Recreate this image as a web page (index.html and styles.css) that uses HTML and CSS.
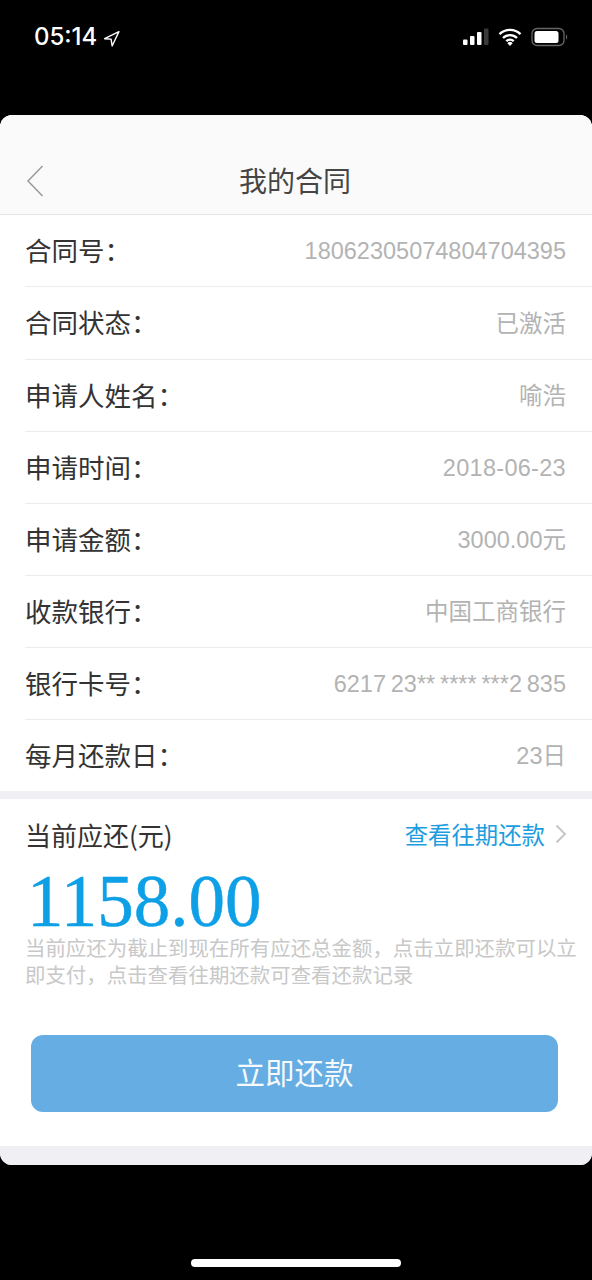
FILE: index.html
```html
<!DOCTYPE html>
<html lang="zh">
<head>
<meta charset="utf-8">
<title>我的合同</title>
<link rel="stylesheet" href="styles.css">
</head>
<body>
<div class="screen">
  <div class="statusbar">
    <div class="status-left">
      <span class="time">05:14</span>
      <svg class="loc" width="17" height="17" viewBox="0 0 16 16"><path d="M15 1.500 1.500 8.200 7.600 8.600 8.600 15Z" fill="none" stroke="#fff" stroke-width="1.300" stroke-linejoin="round"/></svg>
    </div>
    <div class="status-right">
      <svg width="26" height="18" viewBox="0 0 26 18"><rect x="0" y="11.500" width="4.500" height="5.500" rx="1" fill="#fff"/><rect x="7" y="8" width="4.500" height="9" rx="1" fill="#fff"/><rect x="14" y="4" width="4.500" height="13" rx="1" fill="#fff"/><rect x="21" y="0.500" width="4.500" height="16.500" rx="1" fill="#3a3a3a"/></svg>
      <svg width="24" height="18" viewBox="0 0 24 18"><path d="M1.500 6.200a15 15 0 0 1 21 0M5 10a10 10 0 0 1 14 0M8.300 13.200a5.400 5.400 0 0 1 7.400 0" fill="none" stroke="#fff" stroke-width="2.400"/><path d="M12 18l-2.600-2.800a3.600 3.600 0 0 1 5.200 0Z" fill="#fff"/></svg>
      <svg width="38" height="20" viewBox="0 0 38 20"><rect x="1" y="1.500" width="32" height="17" rx="5" fill="none" stroke="#666" stroke-width="1.300"/><rect x="3.500" y="4" width="24" height="12" rx="2.500" fill="#fff"/><path d="M35 7.500c1.600.4 1.600 4.600 0 5Z" fill="#666"/></svg>
    </div>
  </div>
  <div class="card">
    <header class="nav">
      <svg class="back" width="18" height="32" viewBox="0 0 18 32"><path d="M16.500 1 2 16l14.500 15" fill="none" stroke="#9a9a9a" stroke-width="1.500"/></svg>
      <h1 class="nav-title">我的合同</h1>
    </header>
    <div class="rows">
      <div class="row"><span class="label">合同号：</span><span class="value">18062305074804704395</span></div>
      <div class="row"><span class="label">合同状态：</span><span class="value">已激活</span></div>
      <div class="row"><span class="label">申请人姓名：</span><span class="value">喻浩</span></div>
      <div class="row"><span class="label">申请时间：</span><span class="value value-date">2018-06-23</span></div>
      <div class="row"><span class="label">申请金额：</span><span class="value">3000.00元</span></div>
      <div class="row"><span class="label">收款银行：</span><span class="value">中国工商银行</span></div>
      <div class="row"><span class="label">银行卡号：</span><span class="value value-card">6217 23** **** ***2 835</span></div>
      <div class="row"><span class="label">每月还款日：</span><span class="value">23日</span></div>
    </div>
    <section class="due">
      <div class="due-head">
        <span class="due-title">当前应还(元)</span>
        <span class="due-link">查看往期还款<svg class="chev" width="12" height="20" viewBox="0 0 12 20"><path d="M1.500 1.500 10 10l-8.500 8.500" fill="none" stroke="#c4c4c4" stroke-width="1.800"/></svg></span>
      </div>
      <div class="amount">1158.00</div>
      <p class="note">当前应还为截止到现在所有应还总金额，点击立即还款可以立即支付，点击查看往期还款可查看还款记录</p>
      <button class="pay">立即还款</button>
    </section>
    <div class="foot"></div>
  </div>
  <div class="home"></div>
</div>
</body>
</html>
```

FILE: styles.css
```css
* { box-sizing: border-box; }
html, body { margin: 0; padding: 0; background: #000; }
body { font-family: "Noto Sans CJK SC", "Liberation Sans", sans-serif; }
.screen { width: 592px; height: 1280px; background: #000; display: flex; flex-direction: column; overflow: hidden; }
.statusbar { height: 115px; padding: 22px 23px 0 34px; display: flex; justify-content: space-between; align-items: flex-start; color: #fff; flex: none; }
.status-left { display: flex; align-items: center; gap: 6px; height: 30px; }
.loc { margin-top: 2px; }
.time { font: 500 24px/30px "Inter", "Liberation Sans", sans-serif; }
.status-right { display: flex; align-items: center; gap: 9px; height: 30px; }
.card { width: 592px; height: 1050px; background: #fff; border-radius: 12px; overflow: hidden; display: flex; flex-direction: column; flex: none; }
.nav { height: 100px; background: #fafafa; border-bottom: 1px solid #e4e4e4; padding: 42px 2px 0 0; position: relative; text-align: center; flex: none; }
.back { position: absolute; left: 26px; top: 50px; }
.nav-title { margin: 0; font-size: 28px; line-height: 46px; font-weight: 400; color: #454545; }
.rows { padding-left: 25px; flex: none; }
.row { height: 72px; border-bottom: 1px solid #ececec; display: flex; justify-content: space-between; align-items: center; padding: 0 26px 2px 0; }
.row:nth-child(2) { height: 73px; }
.row:last-child { border-bottom: 0; height: 71px; }
.label { font-size: 26.500px; line-height: 34px; color: #333; }
.value { font-size: 23.500px; line-height: 32px; margin-top: 3px; color: #b3b3b3; font-family: "Liberation Sans", "Noto Sans CJK SC", sans-serif; }
.value-date { letter-spacing: 0.300px; }
.value-card { word-spacing: -1.700px; }
.due { border-top: 8px solid #efeff4; padding: 0 10px 0 25px; height: 355px; flex: none; }
.due-head { display: flex; justify-content: space-between; align-items: center; height: 70px; padding-right: 15px; }
.due-title { font-size: 26px; color: #333; }
.due-link { font-size: 23.400px; color: #1b9ddf; display: flex; align-items: center; gap: 10px; }
.amount { font: 73px/62px "Liberation Serif", serif; color: #0ea0e6; margin-top: 2px; padding-left: 2px; -webkit-text-stroke: 0.500px #0ea0e6; }
.note { margin: 1px 0 0; font-size: 20.450px; line-height: 27px; color: #c8c8c8; }
.pay { display: block; margin: 47px 0 0 6px; width: 527px; height: 77px; border: 0; border-radius: 12px; padding: 0 0 5px; background: #65ade2; color: #f6fafd; font: 29.500px "Noto Sans CJK SC", sans-serif; }
.foot { height: 19px; background: #efeff4; flex: none; }
.home { width: 210px; height: 8px; border-radius: 4px; background: #fff; margin: 94px auto 0; flex: none; }
```
